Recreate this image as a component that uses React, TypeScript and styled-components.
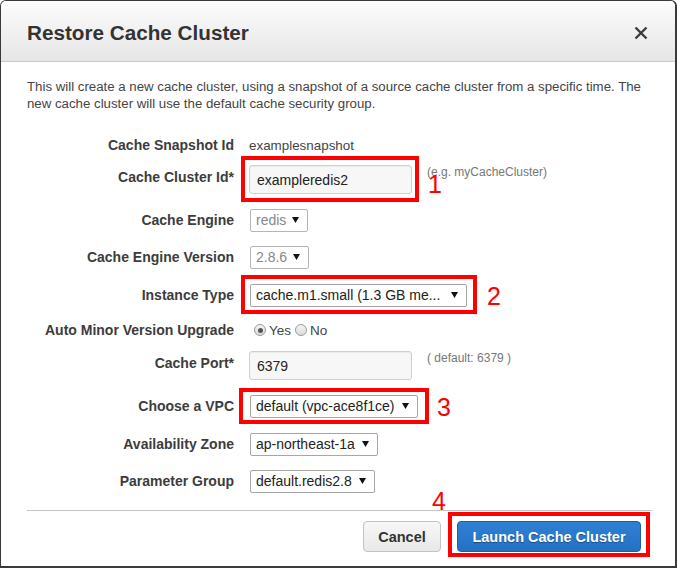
import React from "react";
import styled, { createGlobalStyle } from "styled-components";

const GlobalStyle = createGlobalStyle`
    html, body {
        margin: 0;
        padding: 0;
        background: #ffffff;
    }
    * {
        box-sizing: border-box;
    }
`;

const Dialog = styled.div`
    width: 677px;
    height: 568px;
    overflow: hidden;
    background: #ffffff;
    border: 1px solid #3a3a3a;
    border-right-width: 2px;
    border-bottom-width: 2px;
    border-radius: 6px 6px 0 0;
    font-family: "Liberation Sans", Arial, sans-serif;
    color: #444;
    display: flex;
    flex-direction: column;
`;

const Header = styled.div`
    height: 61px;
    flex-shrink: 0;
    display: flex;
    align-items: center;
    justify-content: space-between;
    padding: 3px 26px 0 26px;
    background: linear-gradient(#fcfcfc, #e6e6e6);
    border-bottom: 1px solid #c9c9c9;
    border-radius: 5px 5px 0 0;
`;

const Title = styled.h1`
    margin: 0;
    font-size: 20.7px;
    font-weight: bold;
    color: #333;
`;

const CloseButton = styled.button`
    border: none;
    background: transparent;
    padding: 0;
    width: 16px;
    height: 16px;
    display: flex;
    align-items: center;
    justify-content: center;
    cursor: pointer;
`;

const Body = styled.div`
    flex: 1;
    display: flex;
    flex-direction: column;
    padding: 16px 23px 0 26px;
`;

const Description = styled.p`
    margin: 0;
    font-size: 13.25px;
    line-height: 17px;
    color: #444;
`;

const Form = styled.div`
    margin-top: 21px;
    display: flex;
    flex-direction: column;
`;

const Row = styled.div<{ $h: number }>`
    height: ${(p) => p.$h}px;
    display: grid;
    grid-template-columns: 207px 1fr;
    column-gap: 15px;
    align-items: center;
`;

const Label = styled.div<{ $raise?: boolean }>`
    text-align: right;
    font-size: 14px;
    font-weight: bold;
    color: #3c3c3c;
    white-space: nowrap;
    padding-bottom: ${(p) => (p.$raise ? 6 : 0)}px;
`;

const Value = styled.div`
    font-size: 13.4px;
    color: #444;
`;

const Control = styled.div`
    display: flex;
    align-items: flex-start;
    gap: 15px;
`;

const Anchor = styled.div`
    position: relative;
    display: flex;
`;

const TextInput = styled.div`
    width: 163px;
    height: 29px;
    display: flex;
    align-items: center;
    padding-left: 7px;
    font-size: 14px;
    color: #222;
    background: #f7f7f7;
    border: 1px solid #cfcfcf;
    border-radius: 3px;
    box-shadow: inset 0 1px 1px rgba(0, 0, 0, 0.05);
`;

const Hint = styled.span`
    font-size: 12px;
    line-height: 14px;
    color: #777;
`;

const Select = styled.div<{ $w: number; $disabled?: boolean }>`
    width: ${(p) => p.$w}px;
    height: 23px;
    margin-left: 1px;
    display: flex;
    align-items: center;
    justify-content: space-between;
    padding: 0 8px 0 5px;
    font-size: 14px;
    white-space: nowrap;
    color: ${(p) => (p.$disabled ? "#888" : "#222")};
    background: #ffffff;
    border: 1px solid ${(p) => (p.$disabled ? "#b5b5b5" : "#a6a6a6")};
    border-radius: 2px;
`;

const Highlight = styled.div<{ $t: number; $r: number; $b: number; $l: number }>`
    position: absolute;
    top: ${(p) => p.$t}px;
    right: ${(p) => p.$r}px;
    bottom: ${(p) => p.$b}px;
    left: ${(p) => p.$l}px;
    border: 4px solid #ff0000;
    pointer-events: none;
`;

const Marker = styled.span<{ $x: number; $y: number }>`
    position: absolute;
    top: ${(p) => p.$y}px;
    left: ${(p) => p.$x}px;
    font-size: 25px;
    line-height: 25px;
    color: #ff0000;
`;

const RadioGroup = styled.div`
    display: flex;
    align-items: center;
    font-size: 13.5px;
    color: #444;
    padding-left: 5px;
`;

const RadioOption = styled.label`
    display: flex;
    align-items: center;
    gap: 3px;
    margin-right: 4px;
`;

const RadioCircle = styled.span<{ $checked?: boolean }>`
    width: 12px;
    height: 12px;
    border-radius: 50%;
    border: 1px solid #9a9a9a;
    background: linear-gradient(#f4f4f4, #dcdcdc);
    display: flex;
    align-items: center;
    justify-content: center;
    &::after {
        content: "";
        width: 5px;
        height: 5px;
        border-radius: 50%;
        background: ${(p) => (p.$checked ? "#555" : "transparent")};
    }
`;

const Separator = styled.div`
    margin-top: 9px;
    height: 1px;
    background: #c4c4c4;
`;

const Footer = styled.div`
    display: flex;
    justify-content: flex-end;
    gap: 16px;
    padding: 10px 11px 0 0;
`;

const Button = styled.button<{ $primary?: boolean }>`
    width: ${(p) => (p.$primary ? 184 : 78)}px;
    height: 31px;
    padding: 0;
    font-family: "Liberation Sans", Arial, sans-serif;
    font-size: 14.5px;
    font-weight: bold;
    border-radius: 4px;
    cursor: pointer;
    color: ${(p) => (p.$primary ? "#fff" : "#333")};
    text-shadow: ${(p) => (p.$primary ? "0 1px 1px rgba(0,0,0,0.35)" : "none")};
    background: ${(p) =>
        p.$primary ? "linear-gradient(#2f7fd2, #2572c5)" : "linear-gradient(#f7f7f7, #e8e8e8)"};
    border: 1px solid ${(p) => (p.$primary ? "#1e5fa9" : "#c2c2c2")};
`;

const Arrow = () => (
    <svg width="7" height="6" viewBox="0 0 7 6">
        <path d="M0 0 L7 0 L3.5 6 Z" fill="#111" />
    </svg>
);

const CloseIcon = () => (
    <svg width="14" height="14" viewBox="0 0 14 14">
        <path d="M1.5 1.5 L12.5 12.5 M12.5 1.5 L1.5 12.5" stroke="#3c3c3c" strokeWidth="2.4" />
    </svg>
);

type SelectBoxProps = { width: number; value: string; disabled?: boolean };

const SelectBox = ({ width, value, disabled }: SelectBoxProps) => (
    <Select $w={width} $disabled={disabled}>
        <span>{value}</span>
        <Arrow />
    </Select>
);

export default function App() {
    return (
        <>
            <GlobalStyle />
            <Dialog>
                <Header>
                    <Title>Restore Cache Cluster</Title>
                    <CloseButton aria-label="close">
                        <CloseIcon />
                    </CloseButton>
                </Header>
                <Body>
                    <Description>
                        This will create a new cache cluster, using a snapshot of a source cache cluster from a specific time. The
                        new cache cluster will use the default cache security group.
                    </Description>
                    <Form>
                        <Row $h={24}>
                            <Label>Cache Snapshot Id</Label>
                            <Value>examplesnapshot</Value>
                        </Row>
                        <Row $h={45}>
                            <Label $raise>Cache Cluster Id*</Label>
                            <Control>
                                <Anchor>
                                    <TextInput>exampleredis2</TextInput>
                                    <Highlight $t={-9} $r={-7} $b={-8} $l={-8} />
                                    <Marker $x={179} $y={7}>1</Marker>
                                </Anchor>
                                <Hint>(e.g. myCacheCluster)</Hint>
                            </Control>
                        </Row>
                        <Row $h={36}>
                            <Label>Cache Engine</Label>
                            <Control>
                                <SelectBox width={58} value="redis" disabled />
                            </Control>
                        </Row>
                        <Row $h={38}>
                            <Label>Cache Engine Version</Label>
                            <Control>
                                <SelectBox width={59} value="2.8.6" disabled />
                            </Control>
                        </Row>
                        <Row $h={38}>
                            <Label>Instance Type</Label>
                            <Control>
                                <Anchor>
                                    <SelectBox width={217} value="cache.m1.small (1.3 GB me..." />
                                    <Highlight $t={-9} $r={-10} $b={-7} $l={-8} />
                                    <Marker $x={238} $y={0}>2</Marker>
                                </Anchor>
                            </Control>
                        </Row>
                        <Row $h={32}>
                            <Label>Auto Minor Version Upgrade</Label>
                            <RadioGroup>
                                <RadioOption>
                                    <RadioCircle $checked />
                                    Yes
                                </RadioOption>
                                <RadioOption>
                                    <RadioCircle />
                                    No
                                </RadioOption>
                            </RadioGroup>
                        </Row>
                        <Row $h={39}>
                            <Label $raise>Cache Port*</Label>
                            <Control>
                                <TextInput>6379</TextInput>
                                <Hint>( default: 6379 )</Hint>
                            </Control>
                        </Row>
                        <Row $h={42}>
                            <Label>Choose a VPC</Label>
                            <Control>
                                <Anchor>
                                    <SelectBox width={168} value="default (vpc-ace8f1ce)" />
                                    <Highlight $t={-7} $r={-11} $b={-6} $l={-10} />
                                    <Marker $x={188} $y={0}>3</Marker>
                                </Anchor>
                            </Control>
                        </Row>
                        <Row $h={34}>
                            <Label>Availability Zone</Label>
                            <Control>
                                <SelectBox width={128} value="ap-northeast-1a" />
                            </Control>
                        </Row>
                        <Row $h={40}>
                            <Label>Parameter Group</Label>
                            <Control>
                                <SelectBox width={125} value="default.redis2.8" />
                            </Control>
                        </Row>
                    </Form>
                    <Separator />
                    <Footer>
                        <Button>Cancel</Button>
                        <Anchor>
                            <Button $primary>Launch Cache Cluster</Button>
                            <Highlight $t={-9} $r={-9} $b={-5} $l={-9} />
                            <Marker $x={-25} $y={-32}>4</Marker>
                        </Anchor>
                    </Footer>
                </Body>
            </Dialog>
        </>
    );
}
